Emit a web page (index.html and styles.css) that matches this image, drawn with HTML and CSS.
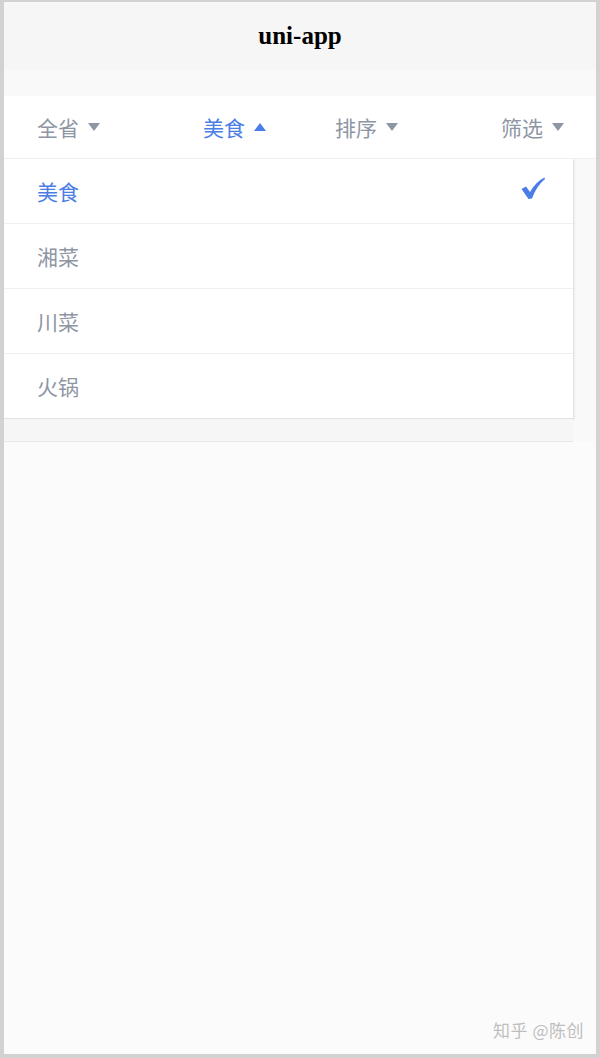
FILE: index.html
```html
<!DOCTYPE html>
<html lang="zh">
<head>
<meta charset="utf-8">
<title>uni-app</title>
<link rel="stylesheet" href="styles.css">
</head>
<body>
<div class="frame">
  <div class="screen">
    <header class="titlebar">uni-app</header>
    <div class="spacer"></div>
    <nav class="filters">
      <div class="filter"><span>全省</span><i class="tri down"></i></div>
      <div class="filter active"><span>美食</span><i class="tri up"></i></div>
      <div class="filter"><span>排序</span><i class="tri down"></i></div>
      <div class="filter"><span>筛选</span><i class="tri down"></i></div>
    </nav>
    <div class="mask">
      <div class="dropdown">
        <div class="option selected"><span>美食</span>
          <svg class="check" width="26" height="26" viewBox="0 0 26 26"><path d="M1.5 13 L6 10.5 L10 16 C13.5 9.5 18.5 4.5 24.5 1.5 L25 3 C19.5 7.5 15 14 12 22.5 L8.5 23 Z" fill="#4a7de6"/></svg>
        </div>
        <div class="option"><span>湘菜</span></div>
        <div class="option"><span>川菜</span></div>
        <div class="option"><span>火锅</span></div>
      </div>
      <div class="under"></div>
    </div>
    <div class="rest">
      <div class="watermark">知乎 @陈创</div>
    </div>
  </div>
</div>
</body>
</html>
```
FILE: styles.css
```css
html, body {
  margin: 0;
  padding: 0;
}
body {
  background: #d2d2d2;
  width: 600px;
  height: 1058px;
  overflow: hidden;
}
.frame {
  padding: 2px 4px 4px 4px;
  height: 1052px;
}
.screen {
  width: 592px;
  height: 1052px;
  background: #fbfbfb;
  display: flex;
  flex-direction: column;
  position: relative;
  font-family: "Noto Sans CJK SC", "Noto Sans", sans-serif;
}
.titlebar {
  height: 68px;
  background: #f6f6f6;
  display: flex;
  align-items: center;
  justify-content: center;
  font-family: "Liberation Serif", "DejaVu Serif", serif;
  font-weight: bold;
  font-size: 25px;
  color: #000;
}
.spacer {
  height: 26px;
  background: #f9f9f9;
}
.filters {
  height: 62px;
  background: #fff;
  display: grid;
  grid-template-columns: 166px 132px 166px 1fr;
  padding-left: 33px;
  align-items: center;
  border-bottom: 1px solid #f0f0f0;
}
.filter {
  display: flex;
  align-items: center;
  gap: 9px;
  color: #8e96a4;
  font-size: 21px;
  line-height: 28px;
}
.filter.active {
  color: #4a7de6;
}
.tri {
  display: block;
  width: 0;
  height: 0;
  border-left: 6px solid transparent;
  border-right: 6px solid transparent;
}
.tri.down {
  border-top: 8px solid #8e96a4;
}
.tri.up {
  border-bottom: 8px solid #4a7de6;
}
.mask {
  background: #f9f9f9;
  display: flex;
  flex-direction: column;
}
.dropdown {
  width: 569px;
  background: #fff;
  box-shadow: 1px 1px 2px rgba(0, 0, 0, 0.12);
}
.option {
  height: 64px;
  display: flex;
  align-items: center;
  justify-content: space-between;
  padding: 0 27px 0 33px;
  border-bottom: 1px solid #f0f0f0;
  color: #8e96a4;
  font-size: 21px;
}
.option:last-child {
  border-bottom: 1px solid #e2e2e2;
}
.option.selected {
  color: #4a7de6;
}
.check {
  margin-top: -4px;
}
.under {
  width: 569px;
  height: 22px;
  background: #f6f6f6;
  border-bottom: 1px solid #e8e8e8;
}
.rest {
  flex: 1;
  background: #fbfbfb;
  position: relative;
}
.watermark {
  position: absolute;
  right: 12px;
  bottom: 12px;
  font-size: 17px;
  color: #bdbdbd;
  letter-spacing: 0.5px;
  text-shadow: 0 0 1px #ffffff;
}
```
